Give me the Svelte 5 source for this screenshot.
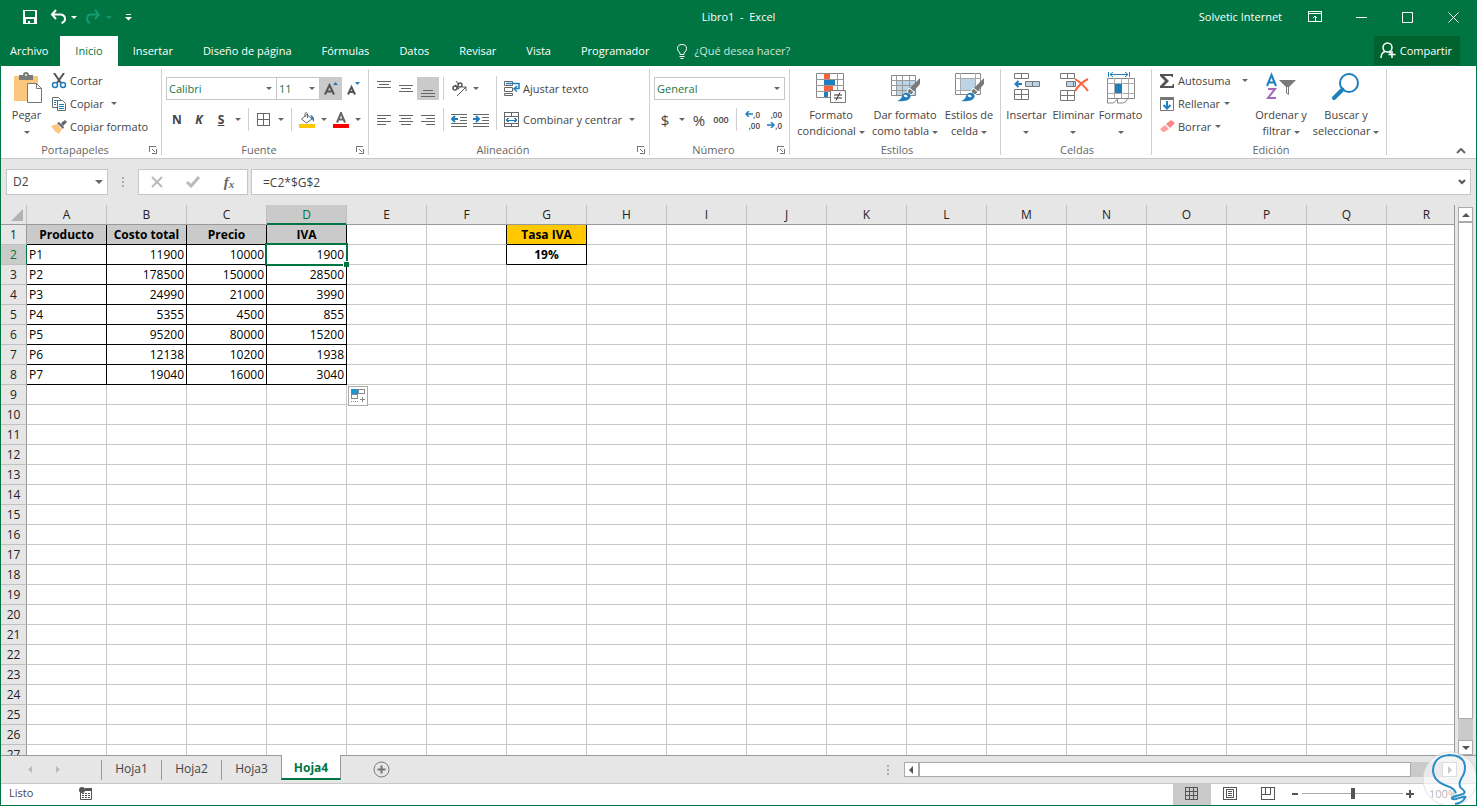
<script lang="ts">
	const menu = ['Archivo', 'Inicio', 'Insertar', 'Diseño de página', 'Fórmulas', 'Datos', 'Revisar', 'Vista', 'Programador'];
	const sheets = ['Hoja1', 'Hoja2', 'Hoja3', 'Hoja4'];
	const cols = 'ABCDEFGHIJKLMNOPQR'.split('');
	const rows = Array.from({ length: 27 }, (_, i) => i + 1);

	const data = [
		['Producto', 'Costo total', 'Precio', 'IVA'],
		['P1', '11900', '10000', '1900'],
		['P2', '178500', '150000', '28500'],
		['P3', '24990', '21000', '3990'],
		['P4', '5355', '4500', '855'],
		['P5', '95200', '80000', '15200'],
		['P6', '12138', '10200', '1938'],
		['P7', '19040', '16000', '3040']
	];

	let activeTab = $state('Inicio');
	let activeSheet = $state('Hoja4');
	let selected = $state({ row: 2, col: 'D' });
	let formula = $state('=C2*$G$2');
	let zoom = $state(100);

	function cell(row: number, col: string) {
		if (col === 'G') return row === 1 ? 'Tasa IVA' : row === 2 ? '19%' : '';
		return data[row - 1]?.[cols.indexOf(col)] ?? '';
	}

	function inTable(row: number, col: string) {
		return row <= 8 && cols.indexOf(col) < 4;
	}
</script>

{#snippet caret()}
	<svg class="caret" width="6" height="3" viewBox="0 0 6 3"><path d="M0 0h6L3 3z" fill="currentColor" /></svg>
{/snippet}

{#snippet drop(label: string)}
	<button class="drop" aria-label={label}>{@render caret()}</button>
{/snippet}

{#snippet lines(list: number[][])}
	<svg width="16" height="16" viewBox="0 0 16 16" shape-rendering="crispEdges">
		{#each list as [x, y, w]}
			<rect {x} {y} width={w} height="1" fill="#666" />
		{/each}
	</svg>
{/snippet}

{#snippet brush()}
	<path d="M31 6v6l-6 7-4-3z" fill="#7a7a7a" />
	<path d="M20 16l5 4-3 3-4-3z" fill="#7a7a7a" stroke="#fff" />
	<path d="M8 29q4-1 5-5 2-4 6-3 4 2 2 5-3 4-13 3z" fill="#1e7fbc" />
	<path d="M15 24q2-1 3 1" stroke="#fff" stroke-width="2" fill="none" />
{/snippet}

{#snippet footer(label: string, launcher: boolean)}
	<div class="footer">
		<span>{label}</span>
		{#if launcher}
			<button class="launcher" aria-label="Configuración de {label}">
				<svg width="8" height="8" viewBox="0 0 8 8" shape-rendering="crispEdges">
					<path d="M0.5 6V0.5H7M7.500 3v4.500H3M3 3l3 3" fill="none" stroke="#777" />
				</svg>
			</button>
		{/if}
	</div>
{/snippet}

<div class="window">
	<header class="titlebar">
		<div class="quick">
			<button aria-label="Guardar">
				<svg width="16" height="16" viewBox="0 0 16 16"><path d="M1 1h14v14H1z" fill="#fff" /><path d="M3 2h10v6H3zM4 10h8v4H8v-2H6v2H4z" fill="#007542" /></svg>
			</button>
			<button aria-label="Deshacer">
				<svg width="17" height="16" viewBox="0 0 17 16"><path d="M6 1L2 5.500 6 10M2 5.500h8q5 0 5 4.500 0 3-3.500 4" fill="none" stroke="#fff" stroke-width="2" /></svg>
			</button>
			{@render drop('Lista de deshacer')}
			<button class="faded" aria-label="Rehacer">
				<svg width="17" height="16" viewBox="0 0 17 16"><path d="M10 1l4 4.500L10 10M14 5.500H6q-4 0-4 4.500 0 3 3 4" fill="none" stroke="#159a70" stroke-width="2" /></svg>
			</button>
			<span class="faded">{@render drop('Lista de rehacer')}</span>
			<button aria-label="Personalizar barra">
				<svg width="7" height="7" viewBox="0 0 7 7"><path d="M1 0h5v1H1zM0 3h7L3.500 6.500z" fill="#fff" /></svg>
			</button>
		</div>
		<h1>Libro1&nbsp; -&nbsp; Excel</h1>
		<div class="system">
			<span>Solvetic Internet</span>
			<button aria-label="Opciones de la cinta">
				<svg width="14" height="12" viewBox="0 0 14 12" fill="none" stroke="#fff" shape-rendering="crispEdges"><path d="M.5.5h13v10H.5zM0 2.500h14M7 5v5" /><path d="M4.500 7.500L7 5l2.500 2.500" /></svg>
			</button>
			<button aria-label="Minimizar"><svg width="11" height="11" viewBox="0 0 11 11"><path d="M0 5h11v1H0z" fill="#fff" /></svg></button>
			<button aria-label="Maximizar"><svg width="11" height="11" viewBox="0 0 11 11"><path d="M.5.5h10v10H.5z" fill="none" stroke="#fff" /></svg></button>
			<button aria-label="Cerrar"><svg width="11" height="11" viewBox="0 0 11 11"><path d="M.5.5l10 10M10.500.5l-10 10" stroke="#fff" /></svg></button>
		</div>
	</header>

	<nav class="menu">
		{#each menu as item}
			<button class="tab" class:active={activeTab === item} onclick={() => (activeTab = item)}>{item}</button>
		{/each}
		<button class="tell">
			<svg width="12" height="16" viewBox="0 0 12 16" fill="none" stroke="#fff"><path d="M4 11.500V10Q1.500 8 1.500 5.500 1.500 1.500 6 1.500t4.500 4Q10.500 8 8 10v1.500zM3.500 13.500h5M4.500 15.500h3" /></svg>
			¿Qué desea hacer?
		</button>
		<button class="share">
			<svg width="16" height="17" viewBox="0 0 16 17" fill="none" stroke="#fff" stroke-width="1.500"><circle cx="7.500" cy="5.500" r="4.500" /><path d="M1 16q0-5 4-6.500M9 10l2 1M12 9v7M8.500 12.500h7" /></svg>
			Compartir
		</button>
	</nav>

	<section class="ribbon">
		<div class="group clipboard">
			<div class="body">
				<button class="large">
					<svg width="30" height="32" viewBox="0 0 30 32">
						<path d="M2 4h24v25H2z" fill="#fac77d" />
						<path d="M7 3h4q0-3 3-3t3 3h4v5H7z" fill="#7a7a7a" /><circle cx="14" cy="3" r="1" fill="#fff" />
						<path d="M15.500 11.500h9l5 5v14h-14z" fill="#fff" stroke="#777" /><path d="M24.500 11.500v5h5" fill="none" stroke="#777" />
					</svg>
					<span>Pegar<br />{@render caret()}</span>
				</button>
				<div class="stack">
					<button class="small">
						<svg width="16" height="16" viewBox="0 0 16 16" fill="none"><path d="M3 0l7 10M13 0L6 10" stroke="#555" stroke-width="2" /><circle cx="4" cy="12" r="2.500" stroke="#1e7fbc" stroke-width="1.500" /><circle cx="12" cy="12" r="2.500" stroke="#1e7fbc" stroke-width="1.500" /></svg>
						Cortar
					</button>
					<div class="split">
						<button class="small">
							<svg width="16" height="16" viewBox="0 0 16 16"><path d="M1.500 1.500h6l2 2v8h-8z" fill="#fff" stroke="#666" /><path d="M6.500 4.500h5l3 3v7h-8z" fill="#fff" stroke="#666" /><path d="M3 4.500h3M3 6.500h2M3 8.500h2M8 8.500h5M8 10.500h5M8 12.500h5" stroke="#1e7fbc" /></svg>
							Copiar
						</button>
						{@render drop('Opciones de copiar')}
					</div>
					<button class="small">
						<svg width="16" height="16" viewBox="0 0 16 16"><path d="M0 7l6-2 5 5-3 5Q3 12 0 7z" fill="#fac77d" /><path d="M6 4l6 6 1-2-5-5zM10 4l4-3 2 2-4 4z" fill="#666" /></svg>
						Copiar formato
					</button>
				</div>
			</div>
			{@render footer('Portapapeles', true)}
		</div>

		<div class="group font">
			<div class="body twin">
				<div class="line">
					<span class="combo face"><select aria-label="Fuente"><option>Calibri</option></select>{@render caret()}</span>
					<span class="combo size"><select aria-label="Tamaño de fuente"><option>11</option></select>{@render caret()}</span>
					<button class="tool on" aria-label="Aumentar tamaño"><svg width="16" height="18" viewBox="0 0 16 18"><path d="M2 14.500L6.500 5l4.500 9.500M4 11.500h5" fill="none" stroke="#555" stroke-width="2" /><path d="M10 5h5l-2.500-3z" fill="#1e7fbc" /></svg></button>
					<button class="tool" aria-label="Disminuir tamaño"><svg width="16" height="18" viewBox="0 0 16 18"><path d="M3 14.500L6.500 7l3.500 7.500M4 12h5" fill="none" stroke="#555" stroke-width="2" /><path d="M10 2h5l-2.500 3z" fill="#1e7fbc" /></svg></button>
				</div>
				<div class="line">
					<button class="tool"><b>N</b></button>
					<button class="tool"><b><i>K</i></b></button>
					<button class="tool"><b><u>S</u></b></button>
					{@render drop('Opciones de subrayado')}
					<i class="sep"></i>
					<button class="tool" aria-label="Bordes"><svg width="14" height="14" viewBox="0 0 14 14" shape-rendering="crispEdges"><path d="M.5.5h12v12H.5zM6.500.5v12M.5 6.500h12" fill="none" stroke="#666" /></svg></button>
					{@render drop('Opciones de bordes')}
					<i class="sep"></i>
					<button class="tool" aria-label="Color de relleno"><svg width="16" height="16" viewBox="0 0 16 16"><path d="M0 12h16v4H0z" fill="#ffc800" /><path d="M2.500 7L8 2.500l5 4.500-5.500 4zM6 5V1.500Q7-.5 8.500 1.500V6" fill="none" stroke="#666" /><path d="M11 3q5 1 4 7-1-1-2-3z" fill="#1e7fbc" /></svg></button>
					{@render drop('Opciones de relleno')}
					<button class="tool" aria-label="Color de fuente"><svg width="16" height="16" viewBox="0 0 16 16"><path d="M0 12h16v4H0z" fill="#f00" /><path d="M4 10.500L8 1l4 9.500M5.500 7.500h5" fill="none" stroke="#666" stroke-width="2" /></svg></button>
					{@render drop('Opciones de color')}
				</div>
			</div>
			{@render footer('Fuente', true)}
		</div>

		<div class="group align">
			<div class="body">
				<div class="twin">
					<div class="line">
						<button class="tool" aria-label="Alinear arriba">{@render lines([[1, 0, 14], [3, 3, 10], [1, 6, 14]])}</button>
						<button class="tool" aria-label="Alinear en el medio">{@render lines([[1, 4, 14], [3, 7, 10], [1, 10, 14]])}</button>
						<button class="tool on" aria-label="Alinear abajo">{@render lines([[3, 9, 10], [1, 12, 14], [1, 15, 14]])}</button>
						<i class="sep"></i>
						<button class="tool" aria-label="Orientación">
							<svg width="17" height="16" viewBox="0 0 17 16" fill="none" stroke="#555"><circle cx="4" cy="7" r="2" stroke-width="1.500" /><path d="M4 4l4 4" stroke-width="1.500" /><circle cx="9" cy="4" r="2" stroke-width="1.500" /><path d="M5 0l3 4M6 15l9-9M11 6h4v4" /></svg>
						</button>
						{@render drop('Opciones de orientación')}
					</div>
					<div class="line">
						<button class="tool" aria-label="Alinear a la izquierda">{@render lines([[1, 3, 14], [1, 6, 9], [1, 9, 14], [1, 12, 9]])}</button>
						<button class="tool" aria-label="Centrar">{@render lines([[1, 3, 14], [3, 6, 10], [1, 9, 14], [3, 12, 10]])}</button>
						<button class="tool" aria-label="Alinear a la derecha">{@render lines([[1, 3, 14], [6, 6, 9], [1, 9, 14], [6, 12, 9]])}</button>
						<i class="sep"></i>
						<button class="tool" aria-label="Disminuir sangría"><svg width="16" height="14" viewBox="0 0 16 14"><path d="M0 1.500h16M9 4.500h7M9 7.500h7M0 10.500h16M0 13.500h16" stroke="#666" /><path d="M7 6H1M4 3L1 6l3 3" fill="none" stroke="#1e7fbc" stroke-width="2" /></svg></button>
						<button class="tool" aria-label="Aumentar sangría"><svg width="16" height="14" viewBox="0 0 16 14"><path d="M0 1.500h16M9 4.500h7M9 7.500h7M0 10.500h16M0 13.500h16" stroke="#666" /><path d="M0 6h6M3 3l3 3-3 3" fill="none" stroke="#1e7fbc" stroke-width="2" /></svg></button>
					</div>
				</div>
				<i class="sep tall"></i>
				<div class="twin">
					<button class="small">
						<svg width="16" height="16" viewBox="0 0 16 16" fill="none"><path d="M.5.5h8v4h-8zM.5 6.500h8v4h-8zM.5 14.500v-2h8v2z" stroke="#666" /><path d="M2 2.500h13v5h-4M13 5l-3 3 3 2.500" stroke="#1e7fbc" stroke-width="1.500" /></svg>
						Ajustar texto
					</button>
					<div class="split">
						<button class="small">
							<svg width="16" height="16" viewBox="0 0 16 16" fill="none" shape-rendering="crispEdges"><path d="M.5.5h14v14H.5zM0 4.500h15M0 11.500h15M7.500 0v4M7.500 12v3" stroke="#666" /><path d="M2 8h11M4.500 6L2.500 8l2 2M10.500 6l2 2-2 2" stroke="#1e7fbc" /></svg>
							Combinar y centrar
						</button>
						{@render drop('Opciones de combinar')}
					</div>
				</div>
			</div>
			{@render footer('Alineación', true)}
		</div>

		<div class="group number">
			<div class="body twin">
				<div class="line">
					<span class="combo format"><select aria-label="Formato de número"><option>General</option></select>{@render caret()}</span>
				</div>
				<div class="line">
					<button class="tool sign">$</button>
					{@render drop('Formatos de contabilidad')}
					<button class="tool sign">%</button>
					<button class="tool tiny">000</button>
					<i class="sep"></i>
					<button class="tool decimals" aria-label="Aumentar decimales"><span><svg width="8" height="6" viewBox="0 0 8 6"><path d="M8 3H1M4 0L1 3l3 3" fill="none" stroke="#1e7fbc" stroke-width="1.500" /></svg>,0</span><span>,00</span></button>
					<button class="tool decimals" aria-label="Disminuir decimales"><span>,00</span><span><svg width="8" height="6" viewBox="0 0 8 6"><path d="M0 3h7M4 0l3 3-3 3" fill="none" stroke="#1e7fbc" stroke-width="1.500" /></svg>,0</span></button>
				</div>
			</div>
			{@render footer('Número', true)}
		</div>

		<div class="group styles">
			<div class="body">
				<button class="large wide">
					<svg width="32" height="32" viewBox="0 0 32 32">
						<path d="M1.500 1.500h27v24h-27z" fill="#fff" stroke="#888" /><path d="M1 7.500h28M1 13.500h28M1 19.500h28M9.500 1v25M22.500 1v25" stroke="#999" fill="none" />
						<path d="M9 2h6v5H9zM9 14h9v5H9z" fill="#f9633b" /><path d="M9 8h11v5H9zM9 20h4v5H9z" fill="#1e7fbc" />
						<path d="M15.500 18.500h15v12h-15z" fill="#fff" stroke="#777" /><path d="M19 23h8M19 26h8M25 20.500l-4 8" stroke="#333" />
					</svg>
					<span>Formato<br />condicional {@render caret()}</span>
				</button>
				<button class="large wide">
					<svg width="32" height="32" viewBox="0 0 32 32">
						<path d="M2.500 3.500h24v20h-24z" fill="#fff" stroke="#888" /><path d="M8 9h18v14H8z" fill="#bcd4e8" /><path d="M2 8.500h25M2 13.500h25M2 18.500h25M7.500 3v20M13.500 3v20M20.500 3v20" stroke="#999" fill="none" />
						{@render brush()}
					</svg>
					<span>Dar formato<br />como tabla {@render caret()}</span>
				</button>
				<button class="large narrow">
					<svg width="32" height="32" viewBox="0 0 32 32">
						<path d="M2.500 1.500h25v21h-25z" fill="#fff" stroke="#888" /><path d="M2 6.500h26M7.500 1v21M2 18.500h26M22.500 1v21" stroke="#aaa" fill="none" /><path d="M8 7h14v11H8z" fill="#bcd4e8" />
						{@render brush()}
					</svg>
					<span>Estilos de<br />celda {@render caret()}</span>
				</button>
			</div>
			{@render footer('Estilos', false)}
		</div>

		<div class="group cells">
			<div class="body">
				<button class="large">
					<svg width="28" height="32" viewBox="0 0 28 32">
						<path d="M1.500 1.500h14v5h-14zM8.500 1.500v5M1.500 17.500h14v10h-14zM8.500 17.500v10M1.500 22.500h14" fill="#fff" stroke="#777" />
						<path d="M12.500 9.500h14v5h-14zM19.500 9.500v5" fill="#bcd4e8" stroke="#777" /><path d="M9 12H3M5.500 9l-3 3 3 3" fill="none" stroke="#1e7fbc" stroke-width="2" />
					</svg>
					<span>Insertar<br />{@render caret()}</span>
				</button>
				<button class="large">
					<svg width="32" height="32" viewBox="0 0 32 32">
						<path d="M2.500 1.500h14v5h-14zM9.500 1.500v5M2.500 18.500h14v10h-14zM9.500 18.500v10M2.500 23.500h14" fill="#fff" stroke="#777" />
						<path d="M8.500 9.500h9v5h-9zM15.500 9.500v5" fill="#bcd4e8" stroke="#777" /><path d="M17 7q7 4 13 12M30 7q-8 4-13 12" fill="none" stroke="#f9633b" stroke-width="2" />
					</svg>
					<span>Eliminar<br />{@render caret()}</span>
				</button>
				<button class="large">
					<svg width="30" height="32" viewBox="0 0 30 32">
						<path d="M1.500 6.500h27v20h-27z" fill="#fff" stroke="#888" /><path d="M1 11.500h28M1 21.500h28M8.500 6v20M15.500 6v20M22.500 6v20" stroke="#aaa" fill="none" />
						<path d="M9 12h7v9H9z" fill="#1e7fbc" /><path d="M2.500 0v5M23.500 0v5M4 2.500h18M7 0L4 2.500 7 5M19 0l3 2.500L19 5" stroke="#1e7fbc" fill="none" />
						<path d="M1.500 27v4h6l4-4v4h5q3 0 5-4" fill="#fff" stroke="#888" />
					</svg>
					<span>Formato<br />{@render caret()}</span>
				</button>
			</div>
			{@render footer('Celdas', false)}
		</div>

		<div class="group editing">
			<div class="body">
				<div class="stack">
					<div class="split apart">
						<button class="small">
							<svg width="16" height="16" viewBox="0 0 16 16"><path d="M1 1h13v3h-1l-1-1H5l5 5-5 5h8l1-2h1v4H1v-2l5-5-5-5z" fill="#555" /></svg>
							Autosuma
						</button>
						{@render drop('Más funciones')}
					</div>
					<button class="small">
						<svg width="16" height="16" viewBox="0 0 16 16"><path d="M1.500 1.500h13v13h-13z" fill="#fff" stroke="#777" /><path d="M1 1h14v3H1z" fill="#777" /><path d="M8 5v8M4.500 9L8 12.500 11.500 9" fill="none" stroke="#1e7fbc" stroke-width="2" /></svg>
						Rellenar {@render caret()}
					</button>
					<button class="small">
						<svg width="16" height="16" viewBox="0 0 16 16"><path d="M7 5l5-4 4 3-5 5z" fill="#ff8585" /><path d="M6 6l4 4-5 3H4L1 10z" fill="#ffa0a0" /></svg>
						Borrar {@render caret()}
					</button>
				</div>
				<button class="large">
					<svg width="32" height="32" viewBox="0 0 32 32">
						<path d="M2 14L6.500 3 11 14M3.500 10.500h6" fill="none" stroke="#1e7fbc" stroke-width="2" /><path d="M3 17h7L3 26h8" fill="none" stroke="#a566bd" stroke-width="2" />
						<path d="M14 8h17l-7 7v8l-3-2v-6z" fill="#7a7a7a" /><path d="M22.500 15v6" stroke="#fff" />
					</svg>
					<span>Ordenar y<br />filtrar {@render caret()}</span>
				</button>
				<button class="large find">
					<svg width="32" height="32" viewBox="0 0 32 32"><circle cx="19" cy="11" r="9" fill="#fff" stroke="#1e7fbc" stroke-width="2" /><path d="M12.500 17.500L4 26" stroke="#1e7fbc" stroke-width="4" stroke-linecap="round" /></svg>
					<span>Buscar y<br />seleccionar {@render caret()}</span>
				</button>
			</div>
			{@render footer('Edición', false)}
		</div>
		<button class="collapse" aria-label="Contraer la cinta"><svg width="10" height="6" viewBox="0 0 10 6"><path d="M1 5l4-4 4 4" fill="none" stroke="#666" stroke-width="2" /></svg></button>
	</section>

	<section class="formula">
		<span class="combo name"><input aria-label="Cuadro de nombres" value={selected.col + selected.row} /><svg class="caret" width="8" height="4" viewBox="0 0 8 4"><path d="M0 0h8L4 4z" fill="currentColor" /></svg></span>
		<svg class="dots" width="2" height="12" viewBox="0 0 2 12"><path d="M0 1h2v2H0zM0 5h2v2H0zM0 9h2v2H0z" fill="#aaa" /></svg>
		<div class="actions">
			<button aria-label="Cancelar"><svg width="12" height="12" viewBox="0 0 12 12"><path d="M1 1l10 10M11 1L1 11" stroke="#bbb" stroke-width="2" /></svg></button>
			<button aria-label="Introducir"><svg width="14" height="12" viewBox="0 0 14 12"><path d="M1 6l4 4 8-9" fill="none" stroke="#bbb" stroke-width="3" /></svg></button>
			<button class="fx" aria-label="Insertar función">f<small>x</small></button>
		</div>
		<div class="entry">
			<input aria-label="Barra de fórmulas" bind:value={formula} />
			<button aria-label="Expandir barra"><svg width="8" height="6" viewBox="0 0 8 6"><path d="M1 1l3 3 3-3" fill="none" stroke="#555" stroke-width="2" /></svg></button>
		</div>
	</section>

	<main class="sheet">
		<div class="grid">
			<table>
				<thead>
					<tr>
						<th class="corner"><svg width="12" height="12" viewBox="0 0 12 12"><path d="M12 0v12H0z" fill="#b2b2b2" /></svg></th>
						{#each cols as col}
							<th class:current={selected.col === col}>{col}</th>
						{/each}
					</tr>
				</thead>
				<tbody>
					{#each rows as row}
						<tr>
							<th class:current={selected.row === row}>{row}</th>
							{#each cols as col}
								<td
									class:boxed={inTable(row, col) || (col === 'G' && row < 3)}
									class:before={col === 'F' && row < 3}
									class:num={inTable(row, col) && col !== 'A'}
									class:head={row === 1 && inTable(row, col)}
									class:rate={col === 'G' && row < 3}
									class:gold={col === 'G' && row === 1}
									class:selected={selected.row === row && selected.col === col}
									onclick={() => (selected = { row, col })}
								>
									{cell(row, col)}
									{#if row === 9 && col === 'E'}
										<button class="autofill" aria-label="Opciones de autorrelleno">
											<svg width="16" height="16" viewBox="0 0 16 16" shape-rendering="crispEdges"><path d="M8.500 1.500h6v4h-6zM1.500 6.500h6v4h-6z" fill="none" stroke="#888" /><path d="M1 1h7v5H1z" fill="#1e93d2" /><path d="M1 13.500h7" stroke="#888" stroke-dasharray="1 1" /><path d="M12.500 9v5M10 11.500h5" stroke="#888" /></svg>
										</button>
									{/if}
								</td>
							{/each}
						</tr>
					{/each}
				</tbody>
			</table>
		</div>
		<div class="vscroll">
			<button aria-label="Subir"><svg width="8" height="4" viewBox="0 0 8 4"><path d="M0 4h8L4 0z" fill="#555" /></svg></button>
			<div class="track"><div class="thumb"></div></div>
			<button aria-label="Bajar"><svg width="8" height="4" viewBox="0 0 8 4"><path d="M0 0h8L4 4z" fill="#555" /></svg></button>
		</div>
	</main>

	<div class="sheets">
		<div class="arrows">
			<button aria-label="Hoja anterior"><svg width="4" height="7" viewBox="0 0 4 7"><path d="M4 0v7L0 3.500z" fill="#bbb" /></svg></button>
			<button aria-label="Hoja siguiente"><svg width="4" height="7" viewBox="0 0 4 7"><path d="M0 0v7l4-3.500z" fill="#bbb" /></svg></button>
		</div>
		{#each sheets as sheet}
			<button class="sheet-tab" class:active={activeSheet === sheet} onclick={() => (activeSheet = sheet)}>{sheet}</button>
		{/each}
		<button class="add" aria-label="Hoja nueva"><svg width="17" height="17" viewBox="0 0 17 17" fill="none" stroke="#777"><circle cx="8.500" cy="8.500" r="7.500" /><path d="M8.500 4.500v8M4.500 8.500h8" stroke-width="2" /></svg></button>
		<svg class="dots" width="2" height="12" viewBox="0 0 2 12"><path d="M0 1h2v2H0zM0 5h2v2H0zM0 9h2v2H0z" fill="#aaa" /></svg>
		<div class="hscroll">
			<button aria-label="Izquierda"><svg width="4" height="8" viewBox="0 0 4 8"><path d="M4 0v8L0 4z" fill="#555" /></svg></button>
			<div class="track"><div class="thumb"></div></div>
			<button aria-label="Derecha"><svg width="4" height="8" viewBox="0 0 4 8"><path d="M0 0v8l4-4z" fill="#777" /></svg></button>
		</div>
	</div>

	<footer class="status">
		<span class="ready">Listo</span>
		<button class="macro" aria-label="Grabar macro"><svg width="14" height="13" viewBox="0 0 14 13"><path d="M1.500 4v8.500h11V2.500H6" fill="#fff" stroke="#555" /><path d="M6 1h7v3H6z" fill="#555" /><circle cx="3" cy="3" r="3" fill="#555" /><path d="M3 6.500h9M3 8.500h9M3 10.500h9" stroke="#555" stroke-dasharray="2 1" /></svg></button>
		<div class="views">
			<button class="on" aria-label="Normal"><svg width="14" height="14" viewBox="0 0 14 14" shape-rendering="crispEdges"><path d="M.5.5h12v12H.5zM4.500.5v12M8.500.5v12M.5 4.500h12M.5 8.500h12" fill="none" stroke="#555" /></svg></button>
			<button aria-label="Diseño de página"><svg width="14" height="14" viewBox="0 0 14 14" shape-rendering="crispEdges"><path d="M.5.5h13v12H.5zM3.500 2.500h7v8h-7zM5 4.500h4M5 6.500h4M5 8.500h4" fill="none" stroke="#555" /></svg></button>
			<button aria-label="Vista de salto de página"><svg width="14" height="14" viewBox="0 0 14 14" shape-rendering="crispEdges"><path d="M.5.5h13v12H.5zM4.500.5v7h5v-7M.5 7.500h4" fill="none" stroke="#555" /></svg></button>
		</div>
		<div class="zoom">
			<button aria-label="Alejar"><svg width="8" height="8" viewBox="0 0 8 8"><path d="M1 3h6v2H1z" fill="#555" /></svg></button>
			<input type="range" aria-label="Zoom" min="10" max="190" bind:value={zoom} />
			<button aria-label="Acercar"><svg width="8" height="8" viewBox="0 0 8 8"><path d="M0 3h8v2H0zM3 0h2v8H3z" fill="#555" /></svg></button>
		</div>
		<span class="percent">{zoom}%</span>
	</footer>

	<svg class="mark" width="60" height="60" viewBox="0 0 60 60">
		<circle cx="28" cy="31" r="27" fill="#fff" fill-opacity=".6" stroke="#ccc" stroke-opacity=".6" />
		<path d="M34 45Q32 40 25 38 11 33 11 22 12 8 27 7q16 0 16 13 0 5-4 11-3 6 0 9 6 4 2 6l-10 3q-3 3 3 2 12-4 9-1-3 5-10 6" fill="none" stroke="#2a8dc7" stroke-width="2" />
	</svg>
</div>

<style>
	:global(body) {
		margin: 0;
	}

	.window {
		display: flex;
		flex-direction: column;
		position: relative;
		height: 100vh;
		min-height: 400px;
		overflow: hidden;
		box-sizing: border-box;
		border: solid #007542;
		border-width: 0 1px 1px;
		background-color: #e6e6e6;
		color: #444;
		font-family: 'Open Sans', 'Noto Sans', sans-serif;
		font-size: 11px;
		line-height: 16px;
	}

	svg {
		display: block;
		flex: none;
	}

	button,
	input,
	select {
		font: inherit;
		color: inherit;
		background: none;
		border: 0;
		margin: 0;
		padding: 0;
		border-radius: 0;
		box-sizing: border-box;
		outline: none;
	}

	button {
		display: flex;
		align-items: center;
		justify-content: center;
		white-space: nowrap;
	}

	.titlebar {
		display: grid;
		grid-template-columns: 1fr auto 1fr;
		align-items: center;
		height: 34px;
		padding-bottom: 2px;
		flex: none;
		background-color: #007542;
		color: #fff;
	}

	h1 {
		font-size: 11px;
		font-weight: normal;
		margin: 0;
	}

	.quick {
		display: flex;
		align-items: center;
		padding-left: 19px;
	}

	.quick button {
		height: 24px;
	}

	.quick button:not(.drop) {
		width: 20px;
	}

	.quick button + button:not(.drop) {
		margin-left: 8px;
	}

	.quick .drop {
		width: 12px;
	}

	.quick .drop + button:not(.drop) {
		margin-left: 3px;
	}

	.quick > span + button {
		margin-left: 3px;
	}

	.faded {
		color: #159a70;
	}

	.system {
		display: flex;
		align-items: center;
		justify-content: flex-end;
	}

	.system button {
		width: 46px;
		height: 30px;
	}

	.system span {
		margin-right: 10px;
	}

	.menu {
		display: flex;
		height: 30px;
		flex: none;
		background-color: #007542;
		color: #fff;
	}

	.tab {
		padding: 0 15px;
	}

	.tab:first-child {
		padding: 0 12px 0 9px;
	}

	.tab.active {
		background-color: #fff;
		color: #007542;
	}

	.tell {
		gap: 6px;
		padding: 0 12px;
		color: #cfe6da;
	}

	.share {
		gap: 4px;
		padding: 0 8px 0 6px;
		margin: 0 16px 1px auto;
		background-color: #00622f;
	}

	.ribbon {
		display: flex;
		flex: none;
		height: 92px;
		background-color: #fff;
		border-bottom: 1px solid #c8c8c8;
	}

	.group {
		display: flex;
		flex-direction: column;
		flex: none;
		box-sizing: border-box;
		padding: 3px 0 0 4px;
		border-right: 1px solid;
		border-image: linear-gradient(#fff 4px, #d0d0d0 4px, #d0d0d0 88px, #fff 88px) 1;
	}

	.clipboard {
		width: 161px;
	}

	.font {
		width: 207px;
	}

	.align {
		width: 281px;
	}

	.number {
		width: 140px;
	}

	.styles {
		width: 211px;
	}

	.cells {
		width: 151px;
		padding-left: 2px;
	}

	.editing {
		width: 235px;
	}

	.body {
		display: flex;
		height: 73px;
	}

	.footer {
		display: flex;
		align-items: center;
		color: #666;
	}

	.footer span {
		flex: 1;
		text-align: center;
	}

	.launcher {
		width: 16px;
		height: 16px;
	}

	.stack {
		display: flex;
		flex-direction: column;
	}

	.twin {
		display: flex;
		flex-direction: column;
		gap: 8px;
		padding: 8px 0 0;
		box-sizing: border-box;
	}

	.line,
	.split {
		display: flex;
		height: 23px;
	}

	.small {
		height: 23px;
		justify-content: flex-start;
		gap: 3px;
		padding-left: 3px;
	}

	.small .caret {
		margin-left: 1px;
	}

	.large {
		flex-direction: column;
		justify-content: flex-start;
		width: 47px;
		padding-top: 3px;
		gap: 3px;
		line-height: 16px;
	}

	.clipboard .large {
		width: 43px;
	}

	.large.wide {
		width: 74px;
	}

	.large.narrow {
		width: 54px;
	}

	.editing .large {
		width: 60px;
	}

	.editing .find {
		width: 70px;
	}

	.editing .stack {
		width: 95px;
	}

	.apart {
		justify-content: space-between;
	}

	.large .caret {
		display: inline-block;
		vertical-align: middle;
	}

	.caret {
		color: #666;
	}

	.quick .caret {
		color: inherit;
	}

	.drop {
		width: 12px;
	}

	.split .drop {
		width: 20px;
	}

	.apart .drop {
		width: 12px;
	}

	.tool {
		width: 22px;
		height: 23px;
		font-size: 12px;
	}

	.tool.on {
		background-color: #cacaca;
	}

	.tool.sign {
		font-size: 15px;
	}

	.tool.tiny {
		font-size: 9px;
		font-weight: 600;
	}

	.tool.decimals {
		flex-direction: column;
		align-items: flex-end;
		padding-right: 3px;
		font-size: 8px;
		font-weight: 600;
		line-height: 11px;
	}

	.decimals span {
		display: flex;
		align-items: center;
	}

	.sep {
		width: 1px;
		margin: 0 4px;
		background-color: #d0d0d0;
	}

	.sep.tall {
		margin: 7px 4px 12px;
	}

	.combo {
		display: flex;
		align-items: center;
		box-sizing: border-box;
		background-color: #fff;
		border: 1px solid #c6c6c6;
		padding-right: 4px;
	}

	.combo select {
		appearance: none;
		flex: 1;
		min-width: 0;
		height: 21px;
		padding-left: 2px;
		color: #217346;
	}

	.combo.face {
		width: 111px;
	}

	.combo.size {
		width: 43px;
		border-left: 0;
	}

	.combo.format {
		width: 131px;
	}

	.collapse {
		align-self: flex-end;
		margin: 0 10px 4px auto;
	}

	.formula {
		display: flex;
		align-items: center;
		flex: none;
		height: 26px;
		padding: 10px 5px;
		font-size: 12px;
	}

	.combo.name {
		width: 102px;
		height: 26px;
	}

	.combo.name input {
		flex: 1;
		min-width: 0;
		padding-left: 6px;
	}

	.formula .dots {
		margin: 0 14px;
	}

	.actions {
		display: flex;
		box-sizing: border-box;
		width: 110px;
		height: 26px;
		margin-right: 3px;
		background-color: #fff;
		border: 1px solid #c6c6c6;
	}

	.actions button {
		flex: 1;
	}

	.fx {
		font: italic bold 15px 'Liberation Serif', serif;
		color: #666;
	}

	.fx small {
		font-size: 11px;
		padding-top: 4px;
	}

	.entry {
		display: flex;
		flex: 1;
		height: 24px;
		background-color: #fff;
		border: 1px solid #c6c6c6;
	}

	.entry input {
		flex: 1;
		min-width: 0;
		padding: 1px 0 0 11px;
	}

	.entry button {
		width: 16px;
	}

	.sheet {
		display: flex;
		flex: 1;
		min-height: 0;
		font-size: 12px;
	}

	.grid {
		flex: 1;
		min-width: 0;
		overflow: hidden;
		border-right: 1px solid #999;
	}

	table {
		table-layout: fixed;
		width: 1466px;
		border-spacing: 0;
		background-color: #fff;
		color: #000;
	}

	th,
	td {
		box-sizing: border-box;
		width: 80px;
		height: 20px;
		padding: 1px 2px 0;
		line-height: 18px;
		border: solid #c8c8c8;
		border-width: 0 1px 1px 0;
		white-space: nowrap;
		position: relative;
	}

	th {
		padding: 1px 0 0;
		font-weight: normal;
		text-align: center;
		color: #222;
		background-color: #e6e6e6;
		border-color: #c0c0c0;
	}

	thead th {
		padding: 0;
		border-bottom-color: #999;
	}

	tbody th {
		border-right-color: #999;
	}

	th.corner {
		width: 26px;
	}

	.corner svg {
		margin: 0 3px 0 auto;
	}

	th.current {
		background-color: #cacaca;
		color: #007542;
	}

	thead th.current {
		box-shadow: inset 0 -1px #007542;
		border-bottom-color: #007542;
	}

	tbody th.current {
		border-right-color: #007542;
	}

	td.boxed {
		border-color: #000;
	}

	td.before {
		border-right-color: #000;
	}

	td.num {
		text-align: right;
	}

	td.head,
	td.rate {
		text-align: center;
		font-weight: bold;
	}

	td.head {
		background-color: #cacaca;
	}

	td.gold {
		background-color: #ffc800;
	}

	td.selected::before {
		content: '';
		position: absolute;
		inset: -2px;
		border: 2px solid #007542;
	}

	td.selected::after {
		content: '';
		position: absolute;
		right: -3px;
		bottom: -3px;
		width: 5px;
		height: 5px;
		background-color: #007542;
		border: solid #fff;
		border-width: 1px 0 0 1px;
		z-index: 1;
	}

	.autofill {
		position: absolute;
		left: 1px;
		top: 1px;
		z-index: 1;
		width: 20px;
		height: 20px;
		background-color: #fff;
		border: 1px solid #aaa;
	}

	.vscroll {
		display: flex;
		flex-direction: column;
		width: 15px;
		padding: 2px 3px 0;
	}

	.vscroll button,
	.hscroll button {
		width: 15px;
		height: 15px;
		flex: none;
		background-color: #fff;
		border: 1px solid #aaa;
	}

	.track {
		flex: 1;
		background-color: #cacaca;
	}

	.thumb {
		box-sizing: border-box;
		background-color: #fff;
		border: 1px solid #aaa;
	}

	.vscroll .thumb {
		height: 96%;
	}

	.hscroll .thumb {
		width: 94%;
		height: 15px;
	}

	.sheets {
		display: flex;
		align-items: center;
		flex: none;
		height: 27px;
		border-top: 1px solid #999;
		border-bottom: 1px solid #c8c8c8;
		font-size: 12px;
	}

	.arrows {
		display: flex;
		width: 100px;
		padding-left: 15px;
		box-sizing: border-box;
	}

	.arrows button {
		width: 28px;
	}

	.sheet-tab {
		width: 60px;
		height: 20px;
		padding-bottom: 2px;
		border-left: 1px solid #999;
	}

	.sheet-tab.active {
		align-self: flex-start;
		height: 25px;
		margin-top: -1px;
		padding: 3px 0 0;
		background-color: #fff;
		border-right: 1px solid #999;
		border-bottom: 2px solid #007542;
		color: #007542;
		font-weight: bold;
	}

	.add {
		margin-left: 32px;
	}

	.sheets .dots {
		margin-left: auto;
	}

	.hscroll {
		display: flex;
		width: 37.5%;
		margin: 0 19px 0 15px;
	}

	.status {
		display: flex;
		align-items: center;
		flex: none;
		height: 21px;
		background-color: #fff;
	}

	.ready {
		width: 70px;
		padding: 0 0 3px 8px;
	}

	.macro,
	.percent,
	.zoom {
		padding-bottom: 2px;
	}

	.views {
		display: flex;
		height: 21px;
		margin-left: auto;
	}

	.views button {
		width: 38px;
		padding-bottom: 1px;
	}

	.views .on {
		background-color: #cacaca;
	}

	.zoom {
		display: flex;
		align-items: center;
		padding-left: 4px;
	}

	.zoom input {
		appearance: none;
		width: 101px;
		height: 12px;
		margin: 0 3px;
		background: linear-gradient(#aaa, #aaa) center / 100% 1px no-repeat;
	}

	.zoom input::-webkit-slider-thumb {
		appearance: none;
		width: 4px;
		height: 11px;
		background-color: #555;
	}

	.percent {
		margin: 0 19px 0 15px;
	}

	.mark {
		position: absolute;
		right: -6px;
		bottom: -3px;
		pointer-events: none;
	}
</style>
